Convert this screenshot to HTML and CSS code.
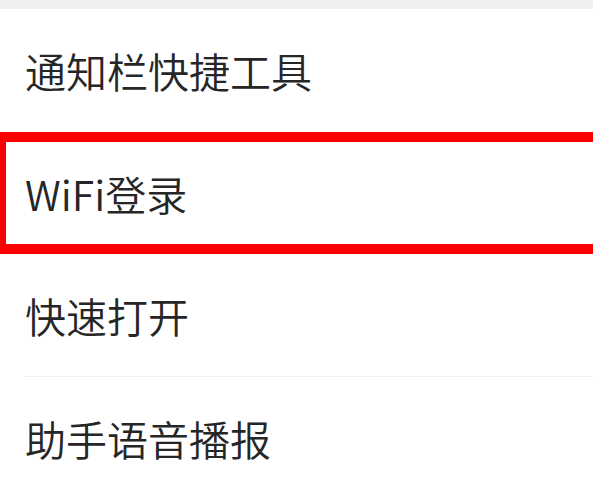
FILE: index.html
```html
<!DOCTYPE html>
<html lang="zh-CN">
<head>
<meta charset="utf-8">
<link rel="stylesheet" href="styles.css">
</head>
<body>
<div class="topbar"></div>
<div class="list">
  <div class="item item-first">通知栏快捷工具</div>
  <div class="item item-marked">WiFi登录<span class="highlight"></span></div>
  <div class="item">快速打开</div>
  <div class="divider"></div>
  <div class="item">助手语音播报</div>
</div>
</body>
</html>
```

FILE: styles.css
```css
html, body {
  margin: 0;
  padding: 0;
  background: #ffffff;
  overflow: hidden;
}
body {
  width: 593px;
  height: 492px;
  font-family: "Noto Sans CJK SC", "Noto Sans", sans-serif;
  color: #262626;
}
.topbar {
  height: 9px;
  background: #efefef;
}
.list {
  display: flex;
  flex-direction: column;
}
.item {
  position: relative;
  height: 122px;
  display: flex;
  align-items: center;
  padding-left: 25px;
  font-size: 41px;
  font-weight: 350;
  line-height: 1;
}
.item-first {
  height: 123px;
}
.highlight {
  position: absolute;
  top: 0;
  bottom: 0;
  left: -4px;
  right: -12px;
  border: 10px solid #fb0000;
  pointer-events: none;
}
.divider {
  height: 1px;
  margin-left: 24px;
  background: #efefef;
}
```
